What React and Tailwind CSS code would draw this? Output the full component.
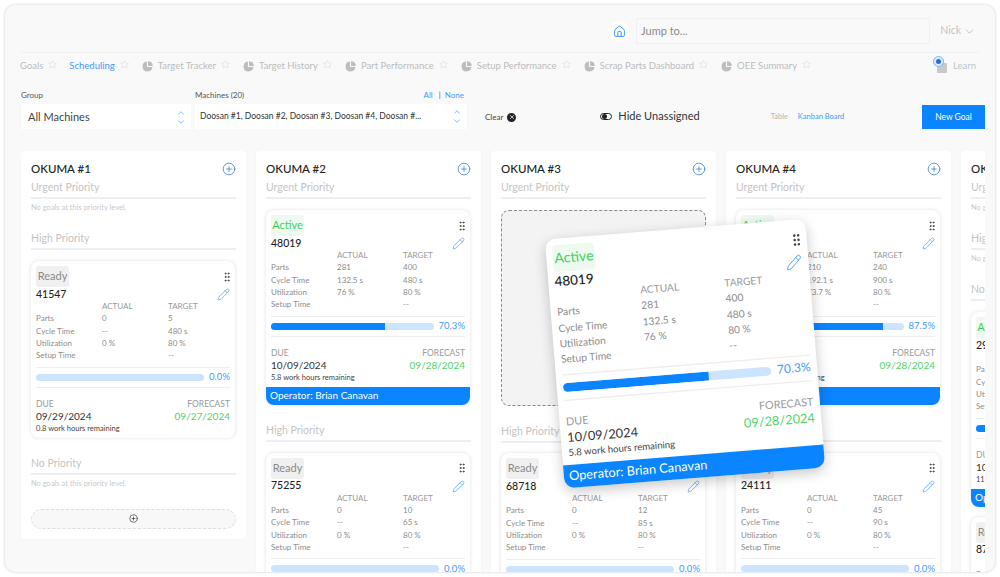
import React from 'react';
import { Star, Pencil, House, ChevronDown, ChevronUp, CirclePlus, GripVertical, X } from 'lucide-react';

const tabs = [
  { label: 'Goals', w: 'mr-[12px]' },
  { label: 'Scheduling', active: true, w: 'mr-[13px]' },
  { label: 'Target Tracker', pie: true, w: 'mr-[13px]' },
  { label: 'Target History', pie: true, w: 'mr-[13px]' },
  { label: 'Part Performance', pie: true, w: 'mr-[13px]' },
  { label: 'Setup Performance', pie: true, w: 'mr-[13px]' },
  { label: 'Scrap Parts Dashboard', pie: true, w: 'mr-[13px]' },
  { label: 'OEE Summary', pie: true, w: '' },
];

const ready = (id, parts, target, extra = {}) => ({
  status: 'Ready', id, parts, actualCycle: '--', util: '0 %', target, targetCycle: extra.cycle, pct: 0,
  due: extra.due || '09/29/2024', forecast: extra.forecast || '09/27/2024', hours: extra.hours || '0.8 work hours remaining',
});

const active48019 = {
  status: 'Active', id: '48019', parts: '281', actualCycle: '132.5 s', util: '76 %', target: '400', targetCycle: '480 s',
  pct: 70.3, due: '10/09/2024', forecast: '09/28/2024', hours: '5.8 work hours remaining', operator: 'Brian Canavan',
};

function Pie() {
  return (
    <svg width="11" height="11" viewBox="0 0 12 12" className="shrink-0 mr-[5px]">
      <path d="M5.4 0.6A5.4 5.4 0 1 0 11.4 6.6H5.4Z" fill="#bdbdbd" />
      <path d="M6.6 0.2A5.4 5.4 0 0 1 11.8 5.4H6.6Z" fill="#bdbdbd" />
    </svg>
  );
}

function Tab({ tab }) {
  return (
    <div className={`flex items-center ${tab.w}`}>
      {tab.pie && <Pie />}
      <span className={tab.active ? 'text-[#3f9bff]' : 'text-[#bcbcbc]'}>{tab.label}</span>
      <Star size={9} strokeWidth={1.2} className="ml-[5px] mb-[4px] text-[#d0d0d0]" />
    </div>
  );
}

function UpDown() {
  return (
    <div className="flex flex-col items-center text-[#3f9bff] shrink-0">
      <ChevronUp size={10} strokeWidth={1.6} className="-mb-[1px]" />
      <ChevronDown size={10} strokeWidth={1.6} />
    </div>
  );
}

function Card({ goal, className = '' }) {
  const isActive = goal.status === 'Active';
  const rows = [
    ['Parts', goal.parts, goal.target],
    ['Cycle Time', goal.actualCycle, goal.targetCycle],
    ['Utilization', goal.util, '80 %'],
    ['Setup Time', '', '--'],
  ];
  return (
    <div className={`bg-white rounded-[8px] shadow-[0_0_4px_rgba(0,0,0,0.12)] w-[204px] ${className}`}>
      <div className="px-[5px] pt-[5px]">
        <div className="flex justify-between items-center h-[21px]">
          <span className={`h-[21px] w-[33px] rounded-[3px] flex items-center justify-center text-[11px] ${isActive ? 'bg-[#eef9f0] text-[#3fd15e]' : 'bg-[#f0f0f0] text-[#8a8a8a]'}`}>
            {goal.status}
          </span>
          <GripVertical size={12} strokeWidth={2} className="text-[#444] -mr-[3px]" />
        </div>
        <div className="flex justify-between items-center h-[12px] mt-[1px] pt-px">
          <span className="text-[10.5px] font-medium text-[#222]">{goal.id}</span>
          <Pencil size={13} strokeWidth={1.3} className="text-[#4a9dff]" />
        </div>
        <div className="grid grid-cols-[66px_66px_1fr] auto-rows-[12.33px] items-center text-[8px] text-[#8c8c8c] leading-none">
          <span />
          <span className="text-[#999]">ACTUAL</span>
          <span className="text-[#999]">TARGET</span>
          {rows.map((r) => (
            <React.Fragment key={r[0]}>
              <span>{r[0]}</span>
              <span>{r[1]}</span>
              <span>{r[2]}</span>
            </React.Fragment>
          ))}
        </div>
        <div className="mt-[5px] h-[21px] border-y border-[#eeeeee] flex items-center gap-[5px]">
          <div className="flex-1 h-[7px] rounded-full bg-[#cce4fd] overflow-hidden">
            <div className="h-full bg-[#0a84ff]" style={{ width: `${goal.pct}%` }} />
          </div>
          <span className="text-[9.5px] text-[#3f9bff] leading-none">{goal.pct.toFixed(1)}%</span>
        </div>
        <div className="flex justify-between text-[8.5px] text-[#999] leading-[10px] pt-[11px]">
          <span>DUE</span>
          <span>FORECAST</span>
        </div>
        <div className="flex justify-between items-center h-[14px] text-[10px] leading-none">
          <span className="text-[#333]">{goal.due}</span>
          <span className="text-[#4fd46c]">{goal.forecast}</span>
        </div>
        <div className="mt-[1px] text-[7.5px] text-[#444] leading-[10px] pb-[4px] whitespace-nowrap">{goal.hours}</div>
      </div>
      {goal.operator && (
        <div className="h-[18px] bg-[#0a84ff] rounded-b-[8px] px-[4px] flex items-center text-[10px] text-white whitespace-nowrap overflow-hidden">
          Operator: {goal.operator}
        </div>
      )}
    </div>
  );
}

function Section({ label, children, first }) {
  return (
    <div className={first ? 'mt-[2px]' : 'mt-[17px]'}>
      <div className="h-[18px] flex items-center text-[10.5px] text-[#c4c4c4]">{label}</div>
      <div className="h-[2px] bg-[#eceef3]" />
      {children}
    </div>
  );
}

function Empty() {
  return <div className="mt-[4px] text-[7.5px] leading-[10px] text-[#c9c9c9]">No goals at this priority level.</div>;
}

function Column({ name, children }) {
  return (
    <div className="w-[225px] shrink-0 bg-white rounded-[4px] shadow-[0_0_3px_rgba(0,0,0,0.04)] px-[10px] pt-[10px] pb-[10px]">
      <div className="h-[16px] flex justify-between items-center">
        <span className="text-[11.5px] font-medium text-[#222] leading-none">{name}</span>
        <CirclePlus size={14} strokeWidth={1.3} className="text-[#2f7fd6]" />
      </div>
      {children}
    </div>
  );
}

export default function App() {
  const col4Active = {
    status: 'Active', id: '48020', parts: '210', actualCycle: '192.1 s', util: '73.7 %', target: '240', targetCycle: '900 s',
    pct: 87.5, due: '10/01/2024', forecast: '09/28/2024', hours: '3.2 work hours remaining', operator: 'Ravi Vai',
  };
  const col5Active = {
    status: 'Active', id: '29114', parts: '96', actualCycle: '88 s', util: '70 %', target: '120', targetCycle: '90 s',
    pct: 20, due: '10/12/2024', forecast: '10/02/2024', hours: '11.9 work hours remaining', operator: 'Brian Canavan',
  };

  return (
    <div className="w-[1000px] h-[577px] bg-white overflow-hidden p-[5px]" style={{ fontFamily: 'Lato, "Liberation Sans", sans-serif' }}>
      <div className="relative h-[567px] bg-[#f9f9f9] rounded-[10px] shadow-[0_0_3px_rgba(0,0,0,0.22)] overflow-hidden">
        {/* top bar */}
        <div className="flex items-center justify-end pt-[13px] pr-[19px]">
          <div className="w-[21px] h-[21px] rounded-full bg-white flex items-center justify-center mr-[6px]">
            <House size={13} strokeWidth={1.7} className="text-[#2f8dff]" />
          </div>
          <div className="w-[294px] h-[26px] border border-[#f0f0f0] flex items-center px-[4px] text-[11px] text-[#8a8a8a]">
            Jump to...
          </div>
          <div className="w-[46px] flex items-center justify-end text-[10.5px] text-[#c4c4c4]">
            Nick
            <ChevronDown size={13} strokeWidth={1.5} className="ml-[2px] text-[#b5b5b5]" />
          </div>
        </div>
        <div className="mt-[8px] mx-[15px] h-px bg-[#f1f1f1]" />

        {/* tabs */}
        <div className="flex items-center justify-between h-[26px] pl-[15px] pr-[19px] text-[9.5px]">
          <div className="flex items-center">
            {tabs.map((t) => (
              <Tab key={t.label} tab={t} />
            ))}
          </div>
          <div className="flex items-center text-[#c4c4c4]">
            <div className="relative w-[10px] h-[10px] bg-[#c9c9c9] rounded-[1px] mr-[6px] mt-[3px]">
              <span className="absolute -left-[4px] -top-[7px] w-[11px] h-[11px] rounded-full border border-[#7fb4f5] bg-[#dcebfd] flex items-center justify-center">
                <span className="w-[5px] h-[5px] rounded-full bg-[#2a6fd0]" />
              </span>
            </div>
            Learn
          </div>
        </div>

        {/* filters */}
        <div className="flex items-end pl-[16px] pr-[10px] mt-[10px]">
          <div className="w-[170px] mr-[4px]">
            <div className="h-[12px] text-[8px] leading-[12px] text-[#555] mb-[3px]">Group</div>
            <div className="h-[25px] bg-white flex items-center justify-between pl-[7px] pr-[5px] pt-px text-[11px] text-[#444]">
              All Machines
              <UpDown />
            </div>
          </div>
          <div className="w-[272px]">
            <div className="h-[12px] flex justify-between text-[8px] leading-[12px] text-[#555] mb-[3px] pr-[3px]">
              <span>Machines (20)</span>
              <span className="text-[#3f9bff]">
                All<span className="text-[#555] ml-[6px] mr-[2px]">|</span> None
              </span>
            </div>
            <div className="h-[25px] bg-white flex items-center justify-between pl-[5px] pr-[5px] text-[8.5px] text-[#333]">
              Doosan #1, Doosan #2, Doosan #3, Doosan #4, Doosan #...
              <UpDown />
            </div>
          </div>
          <div className="h-[25px] flex items-center ml-[18px] pt-px text-[8px] text-[#444]">
            Clear
            <span className="ml-[4px] w-[9px] h-[9px] rounded-full bg-[#222] flex items-center justify-center">
              <X size={6} strokeWidth={3} className="text-white" />
            </span>
          </div>
          <div className="h-[25px] flex items-center ml-[84px] text-[11px] text-[#333]">
            <span className="w-[12px] h-[7px] rounded-full border border-[#222] flex items-center mr-[6px] px-px">
              <span className="w-[5px] h-[5px] rounded-full bg-[#222]" />
            </span>
            Hide Unassigned
          </div>
          <div className="h-[25px] flex items-center ml-[71px] text-[7.5px]">
            <span className="text-[#b5b5b5]">Table</span>
            <span className="ml-[10px] text-[#3f9bff]">Kanban Board</span>
          </div>
          <div className="ml-auto w-[63px] h-[24px] bg-[#0a84ff] flex items-center justify-center text-[8.5px] text-white">
            New Goal
          </div>
        </div>

        {/* board */}
        <div className="mt-[22px] ml-[16px] mr-[10px] overflow-hidden">
          <div className="flex items-start gap-[10px]">
            <Column name="OKUMA #1">
              <Section label="Urgent Priority" first>
                <Empty />
              </Section>
              <Section label="High Priority">
                <Card goal={ready('41547', '0', '5', { cycle: '480 s' })} className="mt-[11px]" />
              </Section>
              <Section label="No Priority">
                <Empty />
                <div className="mt-[20px] h-[20px] rounded-full border border-dashed border-[#dddddd] bg-[#f8f8f8] flex items-center justify-center">
                  <CirclePlus size={9} strokeWidth={1.8} className="text-[#333]" />
                </div>
              </Section>
            </Column>

            <Column name="OKUMA #2">
              <Section label="Urgent Priority" first>
                <Card goal={active48019} className="mt-[11px]" />
              </Section>
              <Section label="High Priority">
                <Card goal={ready('75255', '0', '10', { cycle: '65 s' })} className="mt-[11px]" />
              </Section>
            </Column>

            <Column name="OKUMA #3">
              <Section label="Urgent Priority" first>
                <div className="mt-[11px] h-[196px] w-[205px] rounded-[8px] bg-[#f3f3f3] border border-dashed border-[#8a8a8a]" />
              </Section>
              <Section label="High Priority">
                <Card goal={ready('68718', '0', '12', { cycle: '85 s' })} className="mt-[10px]" />
              </Section>
            </Column>

            <Column name="OKUMA #4">
              <Section label="Urgent Priority" first>
                <Card goal={col4Active} className="mt-[11px]" />
              </Section>
              <Section label="High Priority">
                <Card goal={ready('24111', '0', '45', { cycle: '90 s' })} className="mt-[11px]" />
              </Section>
            </Column>

            <Column name="OKUMA #5">
              <Section label="Urgent Priority" first>
                <Empty />
              </Section>
              <Section label="High Priority">
                <Empty />
              </Section>
              <Section label="No Priority">
                <Card goal={col5Active} className="mt-[11px]" />
                <Card goal={ready('87342', '0', '20', { cycle: '60 s' })} className="mt-[10px]" />
              </Section>
            </Column>
          </div>
        </div>

        {/* card being dragged */}
        <Card
          goal={active48019}
          className="absolute left-[578px] top-[251px] rotate-[-4.6deg] scale-[1.28] shadow-[0_3px_10px_rgba(0,0,0,0.22)]"
        />
      </div>
    </div>
  );
}
